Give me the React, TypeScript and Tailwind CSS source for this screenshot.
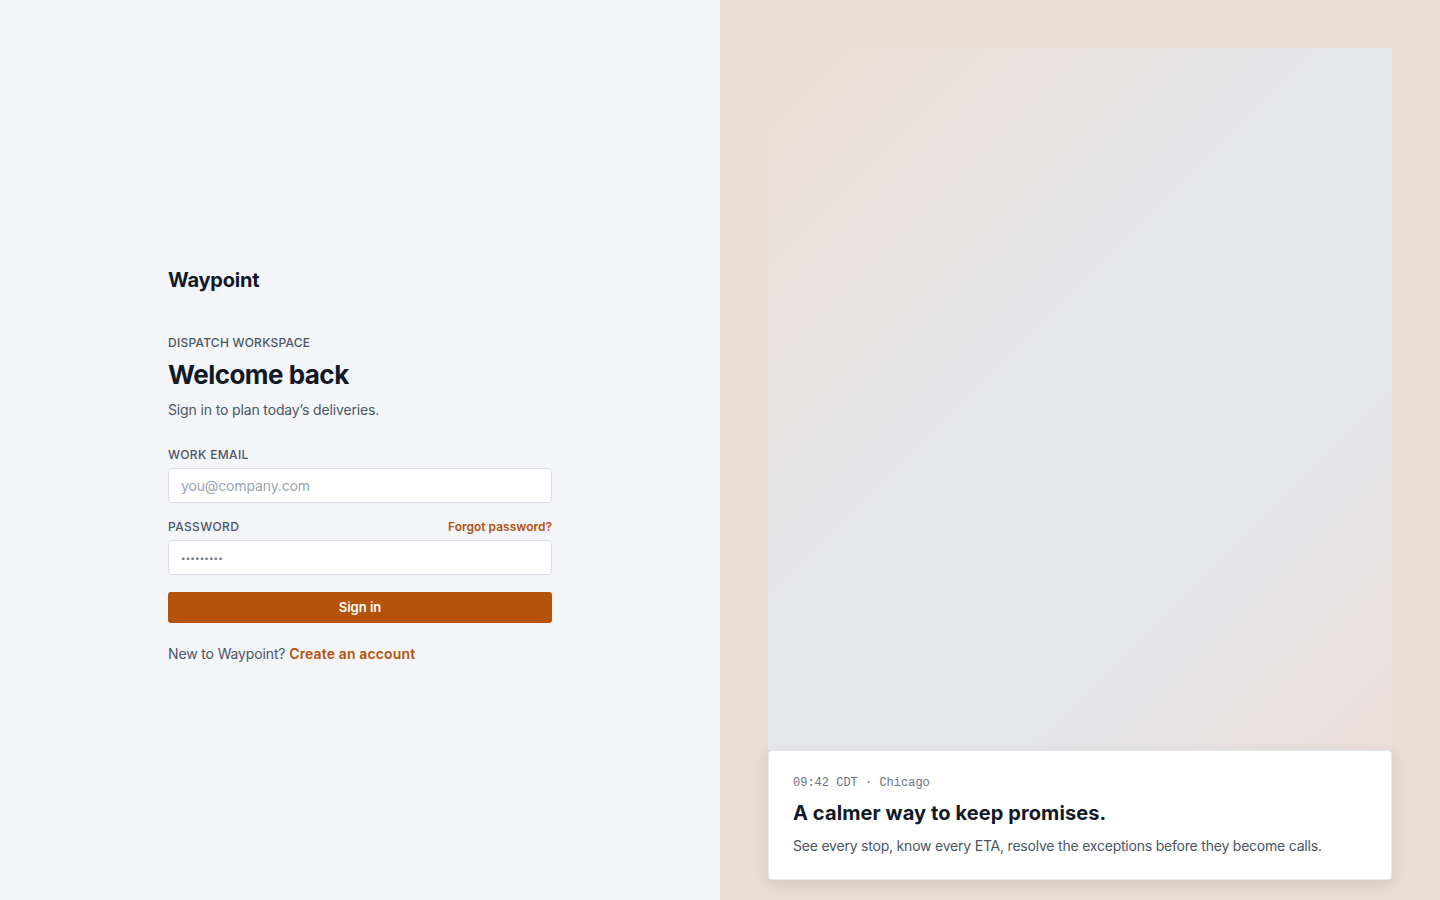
import { useState } from 'react';

const sans = { fontFamily: 'Inter, "Noto Sans", sans-serif' };

export default function App() {
  const [email, setEmail] = useState('');
  const [password, setPassword] = useState('hunter22!');

  return (
    <div className="flex h-[900px] w-full overflow-hidden" style={sans}>
      {/* Left: sign in form */}
      <div className="flex w-[720px] shrink-0 flex-col bg-[#f3f5f9] pl-[168px] pt-[266px]">
        <div className="w-[384px]">
          <div className="text-[20px] font-bold leading-[28px] tracking-[-0.01em] text-[#111827]">Waypoint</div>

          <div className="mt-[41px] text-[12px] font-medium uppercase leading-4 tracking-[0.02em] text-[#4b5563]">
            Dispatch workspace
          </div>
          <h1 className="mt-[7px] text-[26px] font-bold leading-[34px] tracking-[-0.02em] text-[#111827]">Welcome back</h1>
          <p className="mt-[8px] text-[14px] leading-5 tracking-[-0.01em] text-[#4b5563]">Sign in to plan today’s deliveries.</p>

          <form className="mt-[27px]" onSubmit={(e) => e.preventDefault()}>
            <label className="block text-[12px] font-medium uppercase leading-4 tracking-[0.03em] text-[#4b5563]">
              Work email
            </label>
            <input
              type="email"
              value={email}
              onChange={(e) => setEmail(e.target.value)}
              placeholder="you@company.com"
              className="mt-[5px] h-[35px] w-full rounded-[4px] border border-[#d9dde3] bg-white px-3 text-[14px] tracking-[-0.01em] text-[#111827] outline-none placeholder:text-[#9ca3af]"
            />

            <div className="mt-[16px] flex items-center justify-between">
              <label className="text-[12px] font-medium uppercase leading-4 tracking-[0.03em] text-[#4b5563]">Password</label>
              <a href="#" className="text-[12px] font-semibold leading-4 text-[#b45309]">
                Forgot password?
              </a>
            </div>
            <input
              type="password"
              value={password}
              onChange={(e) => setPassword(e.target.value)}
              className="mt-[5px] h-[35px] w-full rounded-[4px] border border-[#d9dde3] bg-white px-3 text-[8px] tracking-[0.02em] text-[#6b7280] outline-none"
            />

            <button
              type="submit"
              className="mt-[17px] h-[31px] w-full rounded-[3px] bg-[#b45309] text-[13px] font-semibold text-white"
            >
              Sign in
            </button>
          </form>

          <p className="mt-[21px] text-[14px] leading-5 tracking-[-0.01em] text-[#4b5563]">
            New to Waypoint?{' '}
            <a href="#" className="font-semibold tracking-[0.01em] text-[#b45309]">
              Create an account
            </a>
          </p>
        </div>
      </div>

      {/* Right: visual panel */}
      <div className="flex flex-1 flex-col bg-[#e9ddd4] px-[48px] pb-[20px] pt-[48px]">
        <div className="flex-1 bg-[linear-gradient(135deg,#eaddd5_0%,#e5e7eb_45%,#e5e7eb_70%,#eadfdb_100%)]" />
        <div className="h-[130px] rounded-[4px] border border-[#e5e7eb] bg-white px-[24px] pt-[24px] shadow-[0_4px_14px_rgba(60,40,30,0.12)]">
          <div
            className="text-[12px] leading-4 text-[#6b7280]"
            style={{ fontFamily: '"Liberation Mono", "DejaVu Sans Mono", monospace' }}
          >
            09:42 CDT · Chicago
          </div>
          <div className="mt-[8px] text-[20px] font-bold leading-7 tracking-[0.005em] text-[#111827]">
            A calmer way to keep promises.
          </div>
          <p className="mt-[9px] text-[14px] leading-5 tracking-[-0.015em] text-[#4b5563]">
            See every stop, know every ETA, resolve the exceptions before they become calls.
          </p>
        </div>
      </div>
    </div>
  );
}
